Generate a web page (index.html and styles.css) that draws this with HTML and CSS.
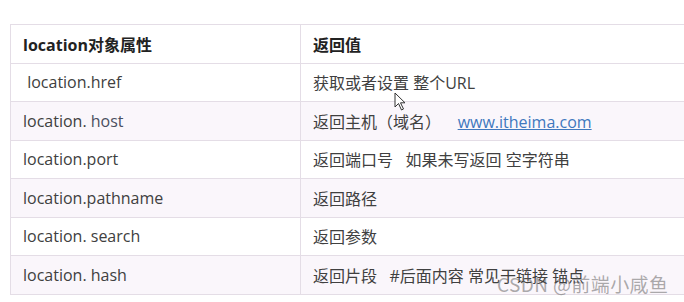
FILE: index.html
```html
<!DOCTYPE html>
<html lang="zh">
<head>
<meta charset="utf-8">
<link rel="stylesheet" href="styles.css">
</head>
<body>
<div class="page">
  <table class="props">
    <thead>
      <tr><th class="c1">location对象属性</th><th>返回值</th></tr>
    </thead>
    <tbody>
      <tr><td class="c1">&nbsp;location.href</td><td>获取或者设置 整个URL</td></tr>
      <tr><td class="c1">location. <span class="sm">host</span></td><td>返回主机（域名）&nbsp;&nbsp;&nbsp; <a class="link" href="#">www.itheima.com</a></td></tr>
      <tr><td class="c1">location.port</td><td>返回端口号&nbsp;&nbsp; 如果未写返回 空字符串</td></tr>
      <tr><td class="c1">location.pathname</td><td>返回路径</td></tr>
      <tr><td class="c1">location. search</td><td>返回参数</td></tr>
      <tr><td class="c1">location. hash</td><td>返回片段&nbsp;&nbsp; #后面内容 常见于链接 锚点</td></tr>
    </tbody>
  </table>
  <svg class="cursor" width="14" height="20" viewBox="0 0 14 20"><path d="M1 1 L1 15 L4.5 11.5 L7.5 18 L9.5 17 L6.5 10.8 L11 10.8 Z" fill="#fff" stroke="#333" stroke-width="1" stroke-linejoin="round"/></svg>
  <div class="watermark">CSDN @前端小咸鱼</div>
</div>
</body>
</html>
```
FILE: styles.css
```css
html, body {
  margin: 0;
  padding: 0;
  background: #fff;
}
body {
  width: 684px;
  height: 302px;
  overflow: hidden;
  font-family: "Open Sans", "Noto Sans CJK SC", sans-serif;
}
.page {
  position: relative;
  padding: 24px 0 0 10px;
}
.props {
  border-collapse: collapse;
  width: 700px;
  color: #404040;
  font-size: 16px;
}
.props th, .props td {
  border: 1px solid #e4dde6;
  height: 38.5px;
  padding: 0 0 0 12px;
  text-align: left;
  vertical-align: middle;
  box-sizing: border-box;
}
.props th {
  font-weight: 700;
  color: #222;
}
.props .c1 {
  width: 290px;
}
.props tbody tr:nth-child(even) {
  background: #faf6fb;
}
.sm {
  color: #4a4f60;
}
.link {
  color: #3f78be;
  text-decoration: underline;
}
.cursor {
  position: absolute;
  left: 394px;
  top: 92px;
}
.watermark {
  position: absolute;
  left: 497px;
  top: 270px;
  font-size: 19px;
  color: rgba(90, 90, 90, 0.5);
  font-family: "Noto Sans CJK SC", sans-serif;
  letter-spacing: 0.4px;
}
```
